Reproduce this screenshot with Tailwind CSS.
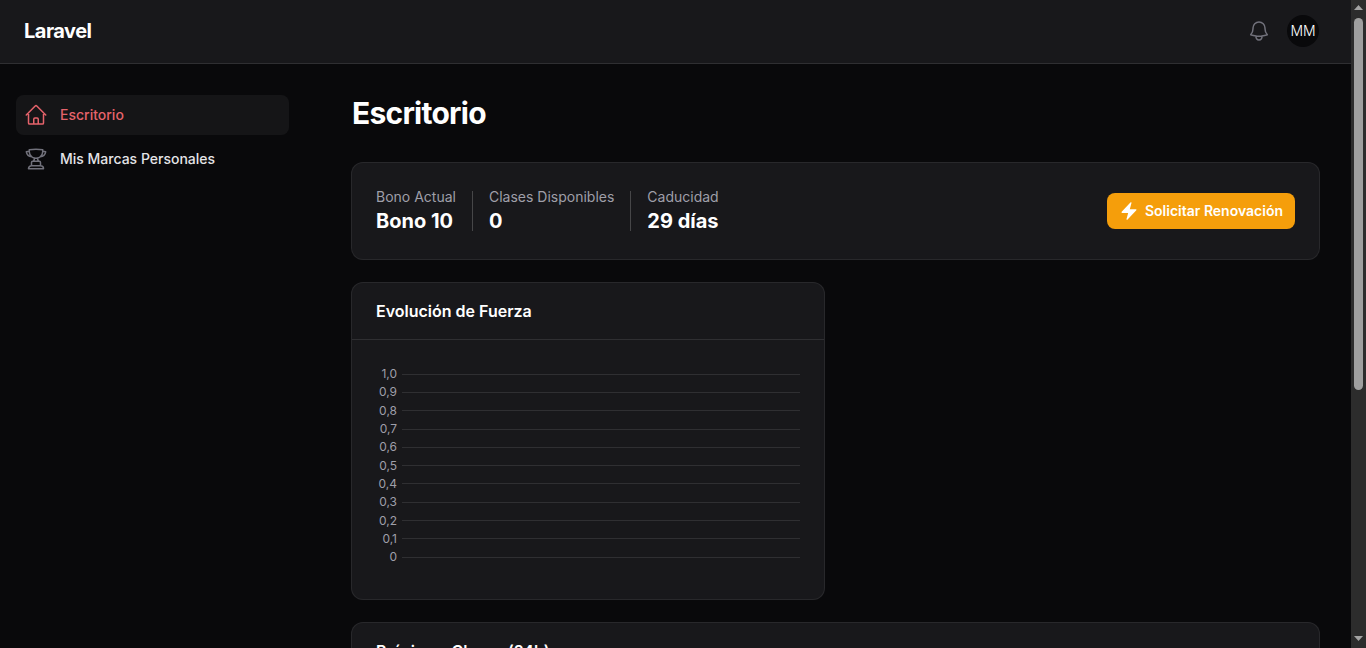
<!DOCTYPE html>
<html lang="en" class="[color-scheme:dark]">
<head>
    <meta charset="UTF-8">
    <meta name="viewport" content="width=device-width, initial-scale=1.0">
    <title>Escritorio</title>
    <script src="https://cdn.jsdelivr.net/npm/@tailwindcss/browser@4"></script>
</head>
<body class="bg-[#09090b] text-white font-['Inter',sans-serif] h-screen overflow-hidden flex">
    <div class="flex-1 min-w-0">
        <header class="h-16 bg-[#18181b] border-b border-white/10 flex items-center justify-between pl-6 pr-8 pb-px">
            <a class="text-xl font-bold tracking-tight leading-none">Laravel</a>
            <div class="flex items-center gap-4">
                <svg class="w-6 h-6 text-zinc-500" fill="none" viewBox="0 0 24 24" stroke-width="1.5" stroke="currentColor"><path stroke-linecap="round" stroke-linejoin="round" d="M14.857 17.082a23.848 23.848 0 0 0 5.454-1.31A8.967 8.967 0 0 1 18 9.75V9A6 6 0 0 0 6 9v.75a8.967 8.967 0 0 1-2.312 6.022c1.733.64 3.56 1.085 5.455 1.31m5.714 0a24.255 24.255 0 0 1-5.714 0m5.714 0a3 3 0 1 1-5.714 0"/></svg>
                <div class="w-8 h-8 rounded-full bg-[#09090b] flex items-center justify-center text-sm font-light">MM</div>
            </div>
        </header>

        <div class="flex">
            <aside class="w-[319px] shrink-0 pt-[31px] pl-4 pr-[30px]">
                <nav class="flex flex-col gap-1">
                    <a class="h-10 px-2 rounded-lg bg-white/5 flex items-center gap-3 text-sm font-medium text-[#e5636b]">
                        <svg class="w-6 h-6" fill="none" viewBox="0 0 24 24" stroke-width="1.5" stroke="currentColor"><path stroke-linecap="round" stroke-linejoin="round" d="m2.25 12 8.954-8.955c.44-.439 1.152-.439 1.591 0L21.75 12M4.5 9.75v10.125c0 .621.504 1.125 1.125 1.125H9.75v-4.875c0-.621.504-1.125 1.125-1.125h2.25c.621 0 1.125.504 1.125 1.125V21h4.125c.621 0 1.125-.504 1.125-1.125V9.75M8.25 21h8.25"/></svg>
                        Escritorio
                    </a>
                    <a class="h-10 px-2 rounded-lg flex items-center gap-3 text-sm font-medium text-zinc-200">
                        <svg class="w-6 h-6 text-zinc-500" fill="none" viewBox="0 0 24 24" stroke-width="1.5" stroke="currentColor"><path stroke-linecap="round" stroke-linejoin="round" d="M16.5 18.75h-9m9 0a3 3 0 0 1 3 3h-15a3 3 0 0 1 3-3m9 0v-3.375c0-.621-.503-1.125-1.125-1.125h-.871M7.5 18.75v-3.375c0-.621.504-1.125 1.125-1.125h.872m5.007 0H9.497m5.007 0a7.454 7.454 0 0 1-.982-3.172M9.497 14.25a7.454 7.454 0 0 0 .981-3.172M5.25 4.236c-.982.143-1.954.317-2.916.52A6.003 6.003 0 0 0 7.73 9.728M5.25 4.236V4.5c0 2.108.966 3.99 2.48 5.228M5.25 4.236V2.721C7.456 2.41 9.71 2.25 12 2.25c2.291 0 4.545.16 6.75.47v1.516M7.73 9.728a6.726 6.726 0 0 0 2.748 1.35m8.272-6.842V4.5c0 2.108-.966 3.99-2.48 5.228m2.48-5.492a46.32 46.32 0 0 1 2.916.52 6.003 6.003 0 0 1-5.395 4.972m0 0a6.726 6.726 0 0 1-2.749 1.35m0 0a6.772 6.772 0 0 1-3.044 0"/></svg>
                        Mis Marcas Personales
                    </a>
                </nav>
            </aside>

            <main class="flex-1 min-w-0 pl-8 pr-[31px] pt-[31px]">
                <h1 class="text-3xl font-bold tracking-tight leading-9 pl-px -ml-8 ml-0">Escritorio</h1>

                <section class="mt-[31px] h-[98px] rounded-xl bg-[#18181b] border border-white/[0.07] flex items-center justify-between px-6">
                    <div class="flex items-center">
                        <div class="pr-4">
                            <p class="text-sm leading-5 text-zinc-400">Bono Actual</p>
                            <p class="text-xl font-bold leading-7">Bono 10</p>
                        </div>
                        <div class="w-px h-10 bg-white/20"></div>
                        <div class="px-4">
                            <p class="text-sm leading-5 text-zinc-400">Clases Disponibles</p>
                            <p class="text-xl font-bold leading-7">0</p>
                        </div>
                        <div class="w-px h-10 bg-white/20"></div>
                        <div class="pl-4">
                            <p class="text-sm leading-5 text-zinc-400">Caducidad</p>
                            <p class="text-xl font-bold leading-7">29 días</p>
                        </div>
                    </div>
                    <button class="h-9 px-3 rounded-lg bg-[#f59e0b] flex items-center gap-1.5 text-sm font-semibold text-white">
                        <svg class="w-5 h-5" viewBox="0 0 24 24" fill="currentColor"><path fill-rule="evenodd" clip-rule="evenodd" d="M14.615 1.595a.75.75 0 0 1 .359.852L12.982 9.75h7.268a.75.75 0 0 1 .548 1.262l-10.5 11.25a.75.75 0 0 1-1.272-.71l1.992-7.302H3.75a.75.75 0 0 1-.548-1.262l10.5-11.25a.75.75 0 0 1 .913-.143Z"/></svg>
                        Solicitar Renovación
                    </button>
                </section>

                <section class="mt-[22px] w-[474px] h-[318px] rounded-xl bg-[#18181b] border border-white/[0.07]">
                    <div class="h-[57px] border-b border-white/10 flex items-center px-6">
                        <h2 class="text-base font-semibold">Evolución de Fuerza</h2>
                    </div>
                    <div class="px-6 pt-[25px] flex flex-col text-xs text-zinc-400">
                        <div class="h-[18.3px] flex items-center gap-[5px]"><span class="w-[21px] text-right">1,0</span><div class="flex-1 h-px bg-white/10"></div></div>
                        <div class="h-[18.3px] flex items-center gap-[5px]"><span class="w-[21px] text-right">0,9</span><div class="flex-1 h-px bg-white/10"></div></div>
                        <div class="h-[18.3px] flex items-center gap-[5px]"><span class="w-[21px] text-right">0,8</span><div class="flex-1 h-px bg-white/10"></div></div>
                        <div class="h-[18.3px] flex items-center gap-[5px]"><span class="w-[21px] text-right">0,7</span><div class="flex-1 h-px bg-white/10"></div></div>
                        <div class="h-[18.3px] flex items-center gap-[5px]"><span class="w-[21px] text-right">0,6</span><div class="flex-1 h-px bg-white/10"></div></div>
                        <div class="h-[18.3px] flex items-center gap-[5px]"><span class="w-[21px] text-right">0,5</span><div class="flex-1 h-px bg-white/10"></div></div>
                        <div class="h-[18.3px] flex items-center gap-[5px]"><span class="w-[21px] text-right">0,4</span><div class="flex-1 h-px bg-white/10"></div></div>
                        <div class="h-[18.3px] flex items-center gap-[5px]"><span class="w-[21px] text-right">0,3</span><div class="flex-1 h-px bg-white/10"></div></div>
                        <div class="h-[18.3px] flex items-center gap-[5px]"><span class="w-[21px] text-right">0,2</span><div class="flex-1 h-px bg-white/10"></div></div>
                        <div class="h-[18.3px] flex items-center gap-[5px]"><span class="w-[21px] text-right">0,1</span><div class="flex-1 h-px bg-white/10"></div></div>
                        <div class="h-[18.3px] flex items-center gap-[5px]"><span class="w-[21px] text-right">0</span><div class="flex-1 h-px bg-white/10"></div></div>
                    </div>
                </section>

                <section class="mt-[22px] rounded-xl bg-[#18181b] border border-white/[0.07]">
                    <div class="h-[57px] border-b border-white/10 flex items-center px-6">
                        <h2 class="text-base font-semibold">Próximas Clases (24h)</h2>
                    </div>
                </section>
            </main>
        </div>
    </div>

    <!-- page scrollbar -->
    <div class="w-[15px] shrink-0 bg-[#2c2c2c] flex flex-col items-center">
        <svg class="w-[9px] h-[5px] mt-[5px] text-[#a3a3a3]" viewBox="0 0 9 5" fill="currentColor"><path d="M4.5 0 9 5H0Z"/></svg>
        <div class="w-[9px] h-[372px] mt-2 rounded-full bg-[#9f9f9f]"></div>
        <svg class="w-[9px] h-[5px] mt-auto mb-[7px] text-[#a3a3a3]" viewBox="0 0 9 5" fill="currentColor"><path d="M0 0h9L4.5 5Z"/></svg>
    </div>
</body>
</html>
